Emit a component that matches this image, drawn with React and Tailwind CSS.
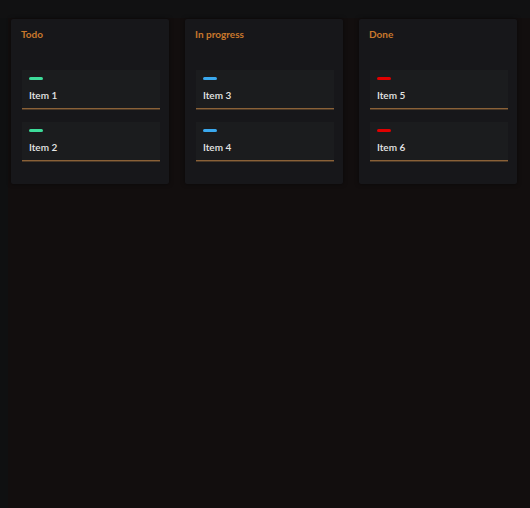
const columns = [
  {
    title: "Todo",
    color: "bg-[#3ddc9a]",
    items: ["Item 1", "Item 2"],
  },
  {
    title: "In progress",
    color: "bg-[#3aa8ee]",
    items: ["Item 3", "Item 4"],
  },
  {
    title: "Done",
    color: "bg-[#e00000]",
    items: ["Item 5", "Item 6"],
  },
]

function Card({ label, color }) {
  return (
    <div className="flex h-[40px] flex-col bg-[#1b1c1e]">
      <div className="flex-1 px-[7px] pt-[7px]">
        <div className={`h-[3px] w-[14px] rounded-full ${color}`} />
        <p className="mt-[8px] text-[10px] font-semibold leading-[14px] text-[#e6e6e6]">
          {label}
        </p>
      </div>
      <div className="h-px bg-[#8a6138]" />
      <div className="h-px bg-[#4a3826]" />
    </div>
  )
}

export default function App() {
  return (
    <div
      className="flex h-[508px] w-[530px] flex-col bg-[#120e0e]"
      style={{ fontFamily: "Lato, 'Noto Sans', sans-serif" }}
    >
      <div className="h-[18px] w-full shrink-0 bg-[#111112]" />

      <div className="flex flex-1">
        <div className="w-[8px] bg-[#0f1011]" />

        <div className="flex-1 pl-[3px] pt-[1px]">
          <div className="grid w-[506px] grid-cols-3 items-start gap-[16px]">
            {columns.map((column) => (
              <div
                key={column.title}
                className="rounded-[2px] bg-[#17171a] pb-[22px] pl-[11px] pr-[9px] pt-[8px] shadow-[0_0_4px_rgba(0,0,0,0.5)]"
              >
                <h2 className="-ml-px text-[10px] font-bold leading-[14px] text-[#c9782c]">
                  {column.title}
                </h2>

                <div className="mt-[29px] space-y-[12px]">
                  {column.items.map((item) => (
                    <Card key={item} label={item} color={column.color} />
                  ))}
                </div>
              </div>
            ))}
          </div>
        </div>
      </div>
    </div>
  )
}
